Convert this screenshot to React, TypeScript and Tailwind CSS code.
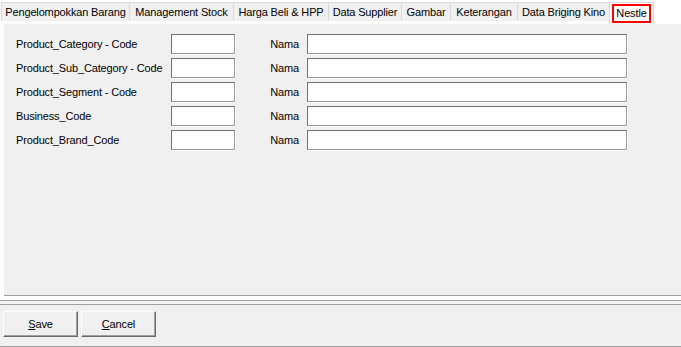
import type { ReactNode } from 'react'

const tabs = [
  { label: 'Pengelompokkan Barang', w: 'w-[128px]' },
  { label: 'Management Stock', w: 'w-[104px]' },
  { label: 'Harga Beli & HPP', w: 'w-[95px]' },
  { label: 'Data Supplier', w: 'w-[73px]' },
  { label: 'Gambar', w: 'w-[49px]' },
  { label: 'Keterangan', w: 'w-[67px]' },
  { label: 'Data Briging Kino', w: 'w-[92px]' },
]

const rows = [
  'Product_Category - Code',
  'Product_Sub_Category - Code',
  'Product_Segment - Code',
  'Business_Code',
  'Product_Brand_Code',
]

function Field({ className }: { className: string }) {
  return (
    <div
      className={`h-[20px] bg-white border border-t-[#6e6e6e] border-l-[#6e6e6e] border-b-[#9a9a9a] border-r-[#9a9a9a] shadow-[1px_1px_0_#ffffff] ${className}`}
    />
  )
}

function Button({ children }: { children: ReactNode }) {
  return (
    <button className="w-[75px] h-[26px] bg-[#f0f0f0] border border-t-white border-l-white border-b-[#696969] border-r-[#696969] shadow-[inset_-1px_-1px_0_#a0a0a0] text-[11px] text-black">
      {children}
    </button>
  )
}

export default function App() {
  return (
    <div className="w-[681px] h-[347px] bg-white flex flex-col overflow-hidden font-['Tahoma','Liberation_Sans',sans-serif] text-[11px] tracking-[-0.15px] text-black">
      <div className="h-[21px] flex items-end pl-[1px]">
        {tabs.map(t => (
          <div
            key={t.label}
            className={`${t.w} h-[19px] shrink-0 flex items-center justify-center bg-[#f0f0f0] border-l border-t border-[#d9d9d9] whitespace-nowrap`}
          >
            {t.label}
          </div>
        ))}
        <div className="w-[45px] h-[22px] shrink-0 bg-white border border-[#d9d9d9] border-b-0 mb-[-3px] relative z-10 flex justify-center pt-[1px]">
          <span className="h-[19px] px-[2px] border-2 border-[#ff0000] leading-[14px] whitespace-nowrap">Nestle</span>
        </div>
      </div>

      <div className="mt-[3px] ml-[4px] h-[272px] bg-[#f0f0f0] border-b border-[#a0a0a0] pt-[10px] pl-[12px] flex flex-col gap-[4px]">
        {rows.map(r => (
          <div key={r} className="flex items-center h-[20px]">
            <span className="w-[155px] shrink-0 whitespace-nowrap">{r}</span>
            <Field className="w-[64px]" />
            <span className="w-[72px] shrink-0 text-right pr-[8px]">Nama</span>
            <Field className="w-[320px]" />
          </div>
        ))}
      </div>

      <div className="h-[4px] bg-white" />
      <div className="h-[1px] bg-[#a0a0a0]" />
      <div className="h-[3px] bg-[#f4f4f4]" />
      <div className="h-[1px] bg-[#a0a0a0]" />

      <div className="flex-1 bg-[#f0f0f0] border-b border-[#a0a0a0] flex gap-[3px] pl-[3px] pt-[6px]">
        <Button>
          <span className="underline">S</span>ave
        </Button>
        <Button>
          <span className="underline">C</span>ancel
        </Button>
      </div>
    </div>
  )
}
